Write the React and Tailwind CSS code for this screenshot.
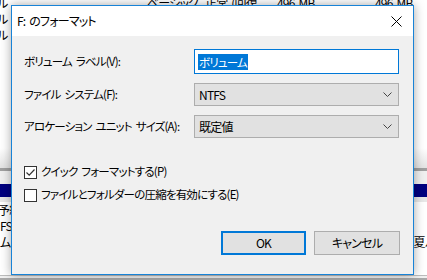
const font = "font-['Yu_Gothic_UI','Noto_Sans_CJK_JP',sans-serif] [font-feature-settings:'palt'] tracking-[-0.8px] [word-spacing:2px]";

function Chevron() {
  return (
    <svg width="9" height="5" viewBox="0 0 9 5" className="text-[#444]">
      <path d="M0.5 0.5 L4.5 4.5 L8.5 0.5" fill="none" stroke="currentColor" strokeWidth="1" />
    </svg>
  );
}

function Select({ value }) {
  return (
    <div className="h-[23px] w-[205px] flex items-center justify-between border border-[#adadad] bg-[#e1e1e1] pl-[4px] pr-[6px] text-[12px] text-black">
      <span>{value}</span>
      <Chevron />
    </div>
  );
}

function Check({ checked, label }) {
  return (
    <div className="flex items-center gap-[4px] h-[16px]">
      <div className="w-[13px] h-[13px] border border-[#333] bg-white flex items-center justify-center">
        {checked && (
          <svg width="11" height="11" viewBox="0 0 11 11">
            <path d="M1.5 5.5 L4.2 8.2 L9.5 2.5" fill="none" stroke="#333" strokeWidth="1.2" />
          </svg>
        )}
      </div>
      <span className="text-[11.5px] text-black whitespace-nowrap">{label}</span>
    </div>
  );
}

function Background() {
  return (
    <div className="flex flex-col h-[280px] bg-white text-[12px] text-black">
      <div className="flex flex-col -mt-[5px]">
        {[0, 1, 2].map((i) => (
          <div key={i} className="h-[16px] flex items-center leading-none whitespace-nowrap">
            <span className="w-[150px] -ml-[3px]">ル</span>
            <span className="w-[58px]">ベーシック</span>
            <span className="w-[72px]">正常 (回復</span>
            <span className="w-[98px]">496 MB</span>
            <span>496 MB</span>
          </div>
        ))}
      </div>
      <div className="h-[105px]" />
      <div className="h-[20px] bg-gradient-to-b from-white to-[#e3e3e3]" />
      <div className="h-[3px] bg-[#a0a0a0]" />
      <div className="h-[13px] bg-[#f0f0f0]" />
      <div className="h-[13px] bg-[#000080]" />
      <div className="h-[5px] bg-[#e8e8e8]" />
      <div className="flex flex-col leading-none whitespace-nowrap">
        <div className="h-[16px] flex items-center -ml-[2px]"><span>予約</span></div>
        <div className="h-[16px] flex items-center"><span>FS</span></div>
        <div className="h-[16px] flex items-center justify-between"><span>ム</span><span className="-mr-[3px]">夏ﾉ</span></div>
      </div>
      <div className="flex-1" />
      <div className="h-[1px] bg-[#bcbcbc]" />
      <div className="h-[2px] bg-[#f0f0f0]" />
      <div className="h-[2px] bg-[#a9a9a9]" />
    </div>
  );
}

export default function App() {
  return (
    <div className={`relative w-[427px] h-[280px] overflow-hidden ${font}`}>
      <Background />
      <div className="absolute left-[11px] top-[5px] w-[403px] h-[270px] border border-[#1883d7] bg-[#f0f0f0] flex flex-col shadow-[0_0_10px_rgba(0,0,0,0.35)]">
        <div className="h-[30px] bg-white flex items-center justify-between pl-[5px] pr-[11px]">
          <span className="text-[12px] text-black">F: のフォーマット</span>
          <svg width="11" height="11" viewBox="0 0 11 11">
            <path d="M0.5 0.5 L10.5 10.5 M10.5 0.5 L0.5 10.5" stroke="#000" strokeWidth="1" />
          </svg>
        </div>
        <div className="flex-1 flex flex-col pl-[12px] pr-[13px] pt-[13px] text-[11.5px] text-black">
          <div className="grid grid-cols-[170px_205px] items-center gap-y-[9px] whitespace-nowrap">
            <span>ボリューム ラベル(V):</span>
            <div className="h-[25px] border border-[#0078d7] bg-white flex items-center pl-[3px]">
              <span className="bg-[#0078d7] text-white px-[1px] leading-[16px] text-[11.5px]">ボリューム</span>
            </div>
            <span>ファイル システム(F):</span>
            <Select value="NTFS" />
            <span>アロケーション ユニット サイズ(A):</span>
            <Select value="既定値" />
          </div>
          <div className="flex flex-col gap-[7px] mt-[26px]">
            <Check checked label="クイック フォーマットする(P)" />
            <Check label="ファイルとフォルダーの圧縮を有効にする(E)" />
          </div>
          <div className="flex justify-end gap-[8px] mt-[28px]">
            <button className="w-[85px] h-[24px] border-2 border-[#0078d7] bg-[#e1e1e1] text-[12px]">OK</button>
            <button className="w-[86px] h-[24px] border border-[#adadad] bg-[#e1e1e1] text-[12px]">キャンセル</button>
          </div>
        </div>
      </div>
    </div>
  );
}
